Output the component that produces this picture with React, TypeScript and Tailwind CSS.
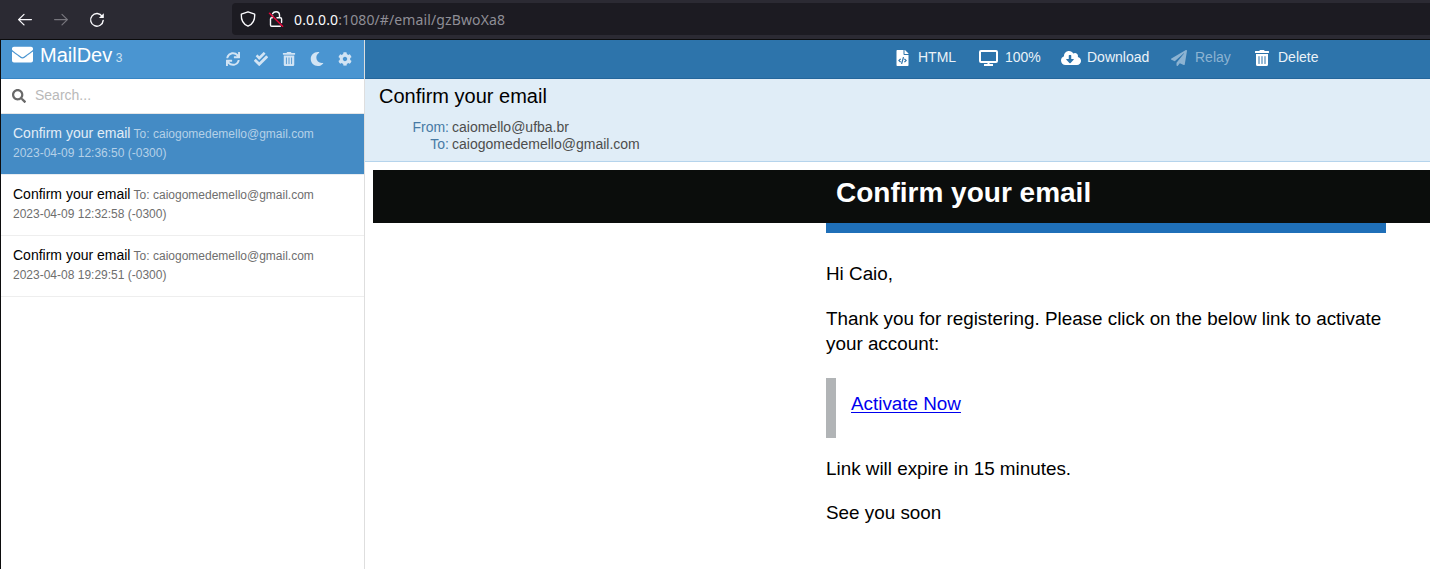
import React from "react";
import {
  FaEnvelope,
  FaSync,
  FaCheckDouble,
  FaTrashAlt,
  FaMoon,
  FaCog,
  FaSearch,
  FaFileCode,
  FaPaperPlane,
  FaCloudDownloadAlt,
} from "react-icons/fa";

const messages = [
  { date: "2023-04-09 12:36:50 (-0300)", active: true },
  { date: "2023-04-09 12:32:58 (-0300)", active: false },
  { date: "2023-04-08 19:29:51 (-0300)", active: false },
];

function BrowserBar() {
  return (
    <div className="flex h-10 shrink-0 items-start border-b border-[#0c0c0d] bg-[#2b2a33] text-[#fbfbfe]">
      <svg className="ml-[17px] mt-3 h-4 w-4 shrink-0" viewBox="0 0 16 16" fill="none" stroke="currentColor" strokeWidth="1.3" strokeLinecap="round" strokeLinejoin="round">
        <path d="M14.4 7.6H1.8M7 2.4 1.6 7.6 7 12.9" />
      </svg>
      <svg className="ml-5 mt-3 h-4 w-4 shrink-0 text-[#77767d]" viewBox="0 0 16 16" fill="none" stroke="currentColor" strokeWidth="1.2" strokeLinecap="round" strokeLinejoin="round">
        <path d="M1.6 7.6h12.6M9 2.4l5.4 5.2L9 12.9" />
      </svg>
      <svg className="ml-5 mt-3 h-4 w-4 shrink-0" viewBox="0 0 16 16" fill="none" stroke="currentColor" strokeWidth="1.4" strokeLinecap="round">
        <path d="M13.2 4.4A6.3 6.3 0 1 0 14.2 8.4" />
        <path d="M14.8 1.2v4.4q0 .5-.5.5H9.9z" fill="currentColor" stroke="none" />
      </svg>
      <div className="ml-[127px] mt-[3px] flex h-8 flex-1 items-center rounded-l bg-[#1c1b22]">
        <svg className="ml-2 h-4 w-4 shrink-0" viewBox="0 0 16 16" fill="none" stroke="currentColor" strokeWidth="1.35" strokeLinejoin="round">
          <path d="M8 .8 1.3 3.2c-.3 5.7 1.6 9.8 6.7 12 5.1-2.2 7-6.3 6.7-12z" />
        </svg>
        <svg className="ml-3 h-4 w-4 shrink-0" viewBox="0 0 16 16" fill="none" stroke="currentColor" strokeWidth="1.4" strokeLinejoin="round" strokeLinecap="round">
          <path d="M4.6 2.6C5.2 1.4 6.5.7 8 .7c2.100 0 3.500 1.400 3.500 3.400v2.400M4.500 4.500v2M9 6.800h3.300c.9 0 1.300.5 1.300 1.200v3.500M4.400 6.800h-.7c-.8 0-1.200.5-1.200 1.200v6c0 .8.4 1.200 1.200 1.200h8.600" />
          <path d="M1.500 2.200 14.600 15.300" stroke="#e4063a" strokeWidth="1.5" />
        </svg>
        <div className="ml-[10px] whitespace-nowrap font-['Noto_Sans',sans-serif] text-[14px] tracking-[0.12px] text-[#8f8e96]">
          <span className="text-[#fbfbfe]">0.0.0.0</span>:1080/#/email/gzBwoXa8
        </div>
      </div>
    </div>
  );
}

function Sidebar() {
  return (
    <aside className="flex w-[364px] shrink-0 flex-col border-r border-[#dedede] bg-white">
      <header className="flex h-[39px] shrink-0 border-b border-[#3785c4] bg-[#4a95d1] text-white">
        <FaEnvelope className="ml-[11px] mt-1 h-[21px] w-[21px]" />
        <h1 className="ml-[7px] mt-[3px] text-[20px] leading-6">
          MailDev <span className="-ml-[2px] text-[12px] text-[#cde2f3]">3</span>
        </h1>
        <div className="ml-auto mr-[12px] mt-3 flex gap-[14px] text-[14px] text-[#d2e4f4]">
          <FaSync />
          <FaCheckDouble />
          <FaTrashAlt />
          <FaMoon />
          <FaCog />
        </div>
      </header>
      <div className="flex h-[35px] shrink-0 items-center border-b border-[#e6e6e6] pl-[11px]">
        <FaSearch className="h-[14px] w-[14px] text-[#696969]" />
        <span className="ml-[9px] pb-[2px] text-[14px] leading-5 text-[#b9b9b9]">Search...</span>
      </div>
      <ul>
        {messages.map((m) => (
          <li
            key={m.date}
            className={
              m.active
                ? "h-[61px] border-b border-[#e8edf2] bg-[#448bc5] pl-3 pt-[9px] text-[#b5d1e8]"
                : "h-[61px] border-b border-[#eeeeee] pl-3 pt-[9px] text-[#6e6e6e]"
            }
          >
            <div className="text-[12px] leading-5">
              <span className={m.active ? "text-[14px] text-[#e2edf7]" : "text-[14px] text-black"}>Confirm your email</span>{" "}
              To: caiogomedemello@gmail.com
            </div>
            <div className="text-[12px] leading-[18px]">{m.date}</div>
          </li>
        ))}
      </ul>
    </aside>
  );
}

function Toolbar() {
  return (
    <nav className="flex h-[39px] shrink-0 items-start border-b border-[#24669b] bg-[#2d74ab] pt-[8px] text-[14px] leading-[18px] text-[#eaf2f8]">
      <div className="ml-[531px] flex w-[83px]">
        <FaFileCode className="mt-[2px] h-4 w-[13px] text-white" />
        <span className="ml-[9px]">HTML</span>
      </div>
      <div className="flex w-[82px]">
        <svg className="mt-[2px] h-4 w-[19px] text-white" viewBox="0 0 19 16" fill="none" stroke="currentColor">
          <rect x="1" y="1" width="17" height="11" rx="1" strokeWidth="2" />
          <path d="M9.500 12v3M5 15h9" strokeWidth="2" />
        </svg>
        <span className="ml-[7px]">100%</span>
      </div>
      <div className="flex w-[110px]">
        <FaCloudDownloadAlt className="mt-[2px] h-4 w-5 text-white" />
        <span className="ml-[6px]">Download</span>
      </div>
      <div className="flex w-[84px] text-[#8cb3d2]">
        <FaPaperPlane className="mt-[2px] h-4 w-4" />
        <span className="ml-2">Relay</span>
      </div>
      <div className="flex">
        <FaTrashAlt className="mt-[2px] h-4 w-[14px] text-white" />
        <span className="ml-[9px]">Delete</span>
      </div>
    </nav>
  );
}

function EmailPane() {
  return (
    <main className="flex min-w-0 flex-1 flex-col overflow-hidden bg-white">
      <Toolbar />
      <section className="h-[83px] shrink-0 border-b border-[#b5d4ec] bg-[#e0edf7] pl-[14px]">
        <h2 className="pt-[5px] text-[20px] leading-6 text-black">Confirm your email</h2>
        <dl className="grid grid-cols-[70px_1fr] gap-x-[3px] pt-[11px] text-[14px] leading-[17px] text-[#4d4d4d]">
          <dt className="text-right text-[#477aa5]">From:</dt>
          <dd>caiomello@ufba.br</dd>
          <dt className="text-right text-[#477aa5]">To:</dt>
          <dd>caiogomedemello@gmail.com</dd>
        </dl>
      </section>
      <article className="ml-2 mt-2 text-black">
        <div className="h-[53px] bg-[#0b0d0c] pl-[463px] pt-[7px] text-[28px] font-bold leading-8 text-white">Confirm your email</div>
        <div className="ml-[453px] w-[560px] text-[18.85px] leading-[25px]">
          <div className="h-[10px] bg-[#1f6fb8]" />
          <p className="mt-7">Hi Caio,</p>
          <p className="mt-5">Thank you for registering. Please click on the below link to activate your account:</p>
          <blockquote className="mt-[22px] h-[60px] border-l-[10px] border-[#b1b4b6] pl-[15px] pt-[13px]">
            <span className="text-[#0000ee] underline decoration-1 underline-offset-2">Activate Now</span>
          </blockquote>
          <p className="mt-[18px]">Link will expire in 15 minutes.</p>
          <p className="mt-[19px]">See you soon</p>
        </div>
      </article>
    </main>
  );
}

export default function App() {
  return (
    <div className="flex h-[569px] w-[1430px] flex-col overflow-hidden font-['Liberation_Sans',Arial,sans-serif]">
      <BrowserBar />
      <div className="flex min-h-0 flex-1 border-l border-[#0c0c0d]">
        <Sidebar />
        <EmailPane />
      </div>
    </div>
  );
}
